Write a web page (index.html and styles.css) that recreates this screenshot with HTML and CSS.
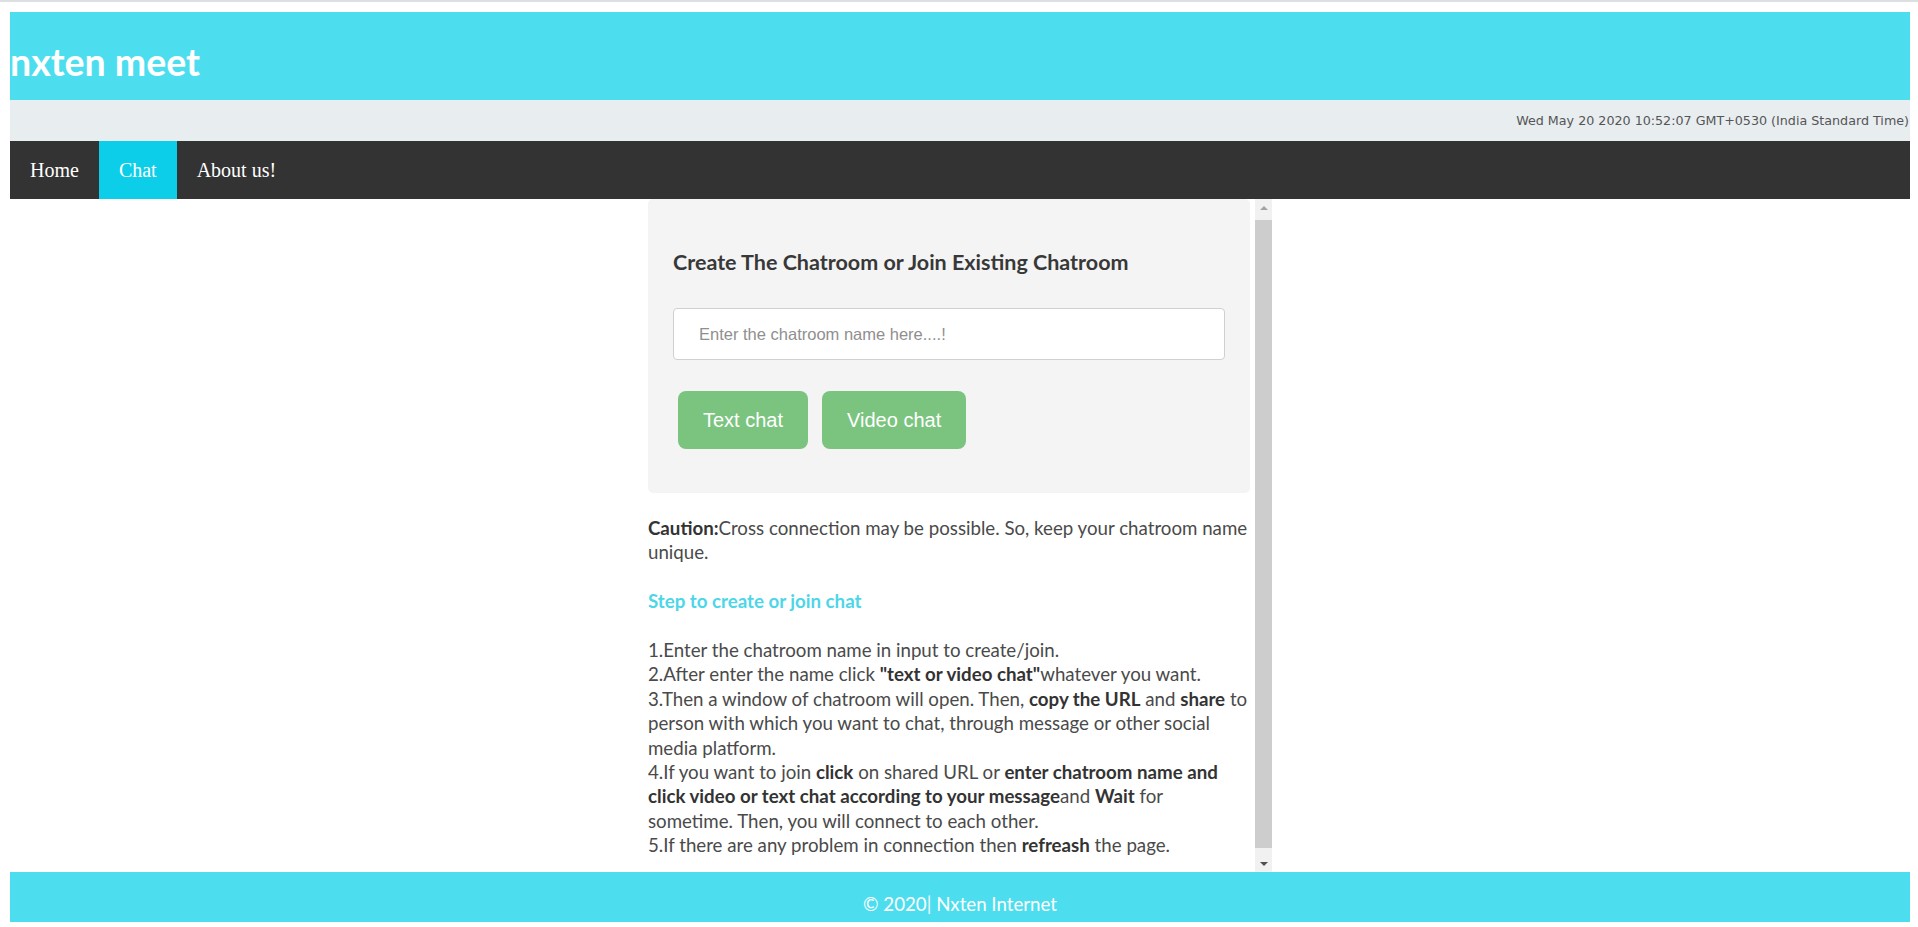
FILE: index.html
```html
<!DOCTYPE html>
<html lang="en">
<head>
<meta charset="utf-8">
<title>nxten meet</title>
<link rel="stylesheet" href="styles.css">
</head>
<body>
<div class="page">
  <header class="brand"><h1 class="brand-title">nxten meet</h1></header>
  <div class="datebar"><span class="date-text">Wed May 20 2020 10:52:07 GMT+0530 (India Standard Time)</span></div>
  <nav class="nav">
    <a class="nav-link" href="#">Home</a>
    <a class="nav-link active" href="#">Chat</a>
    <a class="nav-link" href="#">About us!</a>
  </nav>
  <main class="main">
    <div class="scrollbox">
      <div class="content">
        <div class="card">
          <h3 class="card-title">Create The Chatroom or Join Existing Chatroom</h3>
          <input class="room-input" type="text" placeholder="Enter the chatroom name here....!">
          <div class="btn-row">
            <button class="btn">Text chat</button>
            <button class="btn">Video chat</button>
          </div>
        </div>
        <div class="info">
          <p class="info-p"><b>Caution:</b>Cross connection may be possible. So, keep your chatroom name<br>unique.<br><br><b class="step">Step to create or join chat</b><br><br>1.Enter the chatroom name in input to create/join.<br>2.After enter the name click <b>"text or video chat"</b>whatever you want.<br>3.Then a window of chatroom will open. Then, <b>copy the URL</b> and <b>share</b> to<br>person with which you want to chat, through message or other social<br>media platform.<br>4.If you want to join <b>click</b> on shared URL or <b>enter chatroom name and<br>click video or text chat according to your message</b>and <b>Wait</b> for<br>sometime. Then, you will connect to each other.<br>5.If there are any problem in connection then <b>refreash</b> the page.</p>
        </div>
      </div>
      <div class="scrollbar">
        <div class="sb-btn"><span class="tri-up"></span></div>
        <div class="sb-track"><div class="sb-thumb"></div></div>
        <div class="sb-btn"><span class="tri-down"></span></div>
      </div>
    </div>
  </main>
  <footer class="footer">© 2020| Nxten Internet</footer>
</div>
</body>
</html>
```

FILE: styles.css
```css
html {
  border-top: 2px solid #dcdfe3;
  background: #fff;
}
body {
  margin: 10px 8px 0 10px;
  background: #fff;
}
.page {
  display: flex;
  flex-direction: column;
}
.brand {
  background: #4cdeef;
  height: 88px;
  box-sizing: border-box;
  padding-top: 28px;
}
.brand-title {
  margin: 0;
  font-family: Lato, "Open Sans", sans-serif;
  font-weight: 700;
  font-size: 37.5px;
  line-height: 44px;
  color: #fff;
}
.datebar {
  background: #e8edf0;
  height: 41px;
  text-align: right;
  padding-right: 1px;
}
.date-text {
  font-family: "DejaVu Sans", Verdana, sans-serif;
  font-size: 12.7px;
  line-height: 41px;
  color: #555;
}
.nav {
  background: #333;
  display: flex;
  height: 58px;
}
.nav-link {
  display: block;
  padding: 0 20px;
  line-height: 58px;
  font-family: "Liberation Serif", "Times New Roman", serif;
  font-size: 20px;
  color: #fff;
  text-decoration: none;
}
.nav-link.active {
  background: #0dcee8;
}
.main {
  height: 673px;
  display: flex;
  justify-content: center;
}
.scrollbox {
  width: 624px;
  display: flex;
}
.content {
  flex: 1;
  overflow: hidden;
}
.card {
  background: #f4f4f4;
  border-radius: 5px;
  padding: 49px 25px 44px 25px;
  margin-right: 5px;
}
.card-title {
  margin: 0 0 32px;
  font-family: Lato, "Open Sans", sans-serif;
  font-weight: 700;
  font-size: 21.5px;
  line-height: 28px;
  color: #383838;
}
.room-input {
  display: block;
  width: 100%;
  height: 52px;
  box-sizing: border-box;
  border: 1px solid #d0d0d0;
  border-radius: 4px;
  padding: 0 25px;
  font-family: "Liberation Sans", Arial, sans-serif;
  font-size: 16.5px;
  background: #fff;
  outline: none;
}
.room-input::placeholder {
  color: #8f8f8f;
}
.btn-row {
  display: flex;
  gap: 14px;
  margin-top: 31px;
  padding-left: 5px;
}
.btn {
  height: 58px;
  padding: 0 25px;
  border: none;
  border-radius: 8px;
  background: #7bc47f;
  color: #fff;
  font-family: "Liberation Sans", Arial, sans-serif;
  font-size: 20px;
}
.info {
  margin-top: 23px;
}
.info-p {
  margin: 0;
  font-family: Lato, "Open Sans", sans-serif;
  font-size: 18.7px;
  line-height: 24.4px;
  color: #4a4a4a;
}
.info-p b {
  color: #333;
}
.info-p b.step {
  color: #4dd6e8;
}
.scrollbar {
  width: 17px;
  background: #f1f1f1;
  display: flex;
  flex-direction: column;
}
.sb-btn {
  height: 17px;
  display: flex;
  align-items: center;
  justify-content: center;
}
.tri-up {
  width: 0;
  height: 0;
  border-left: 4px solid transparent;
  border-right: 4px solid transparent;
  border-bottom: 4px solid #a3a3a3;
}
.tri-down {
  width: 0;
  height: 0;
  border-left: 4px solid transparent;
  border-right: 4px solid transparent;
  border-top: 4px solid #505050;
}
.sb-track {
  flex: 1;
  padding: 4px 0 7px;
  display: flex;
}
.sb-thumb {
  flex: 1;
  background: #cdcdcd;
}
.footer {
  height: 50px;
  box-sizing: border-box;
  padding-top: 18px;
  background: #4cdeef;
  text-align: center;
  line-height: 28px;
  font-family: Lato, "Open Sans", sans-serif;
  font-size: 18.7px;
  color: #fff;
}
```
